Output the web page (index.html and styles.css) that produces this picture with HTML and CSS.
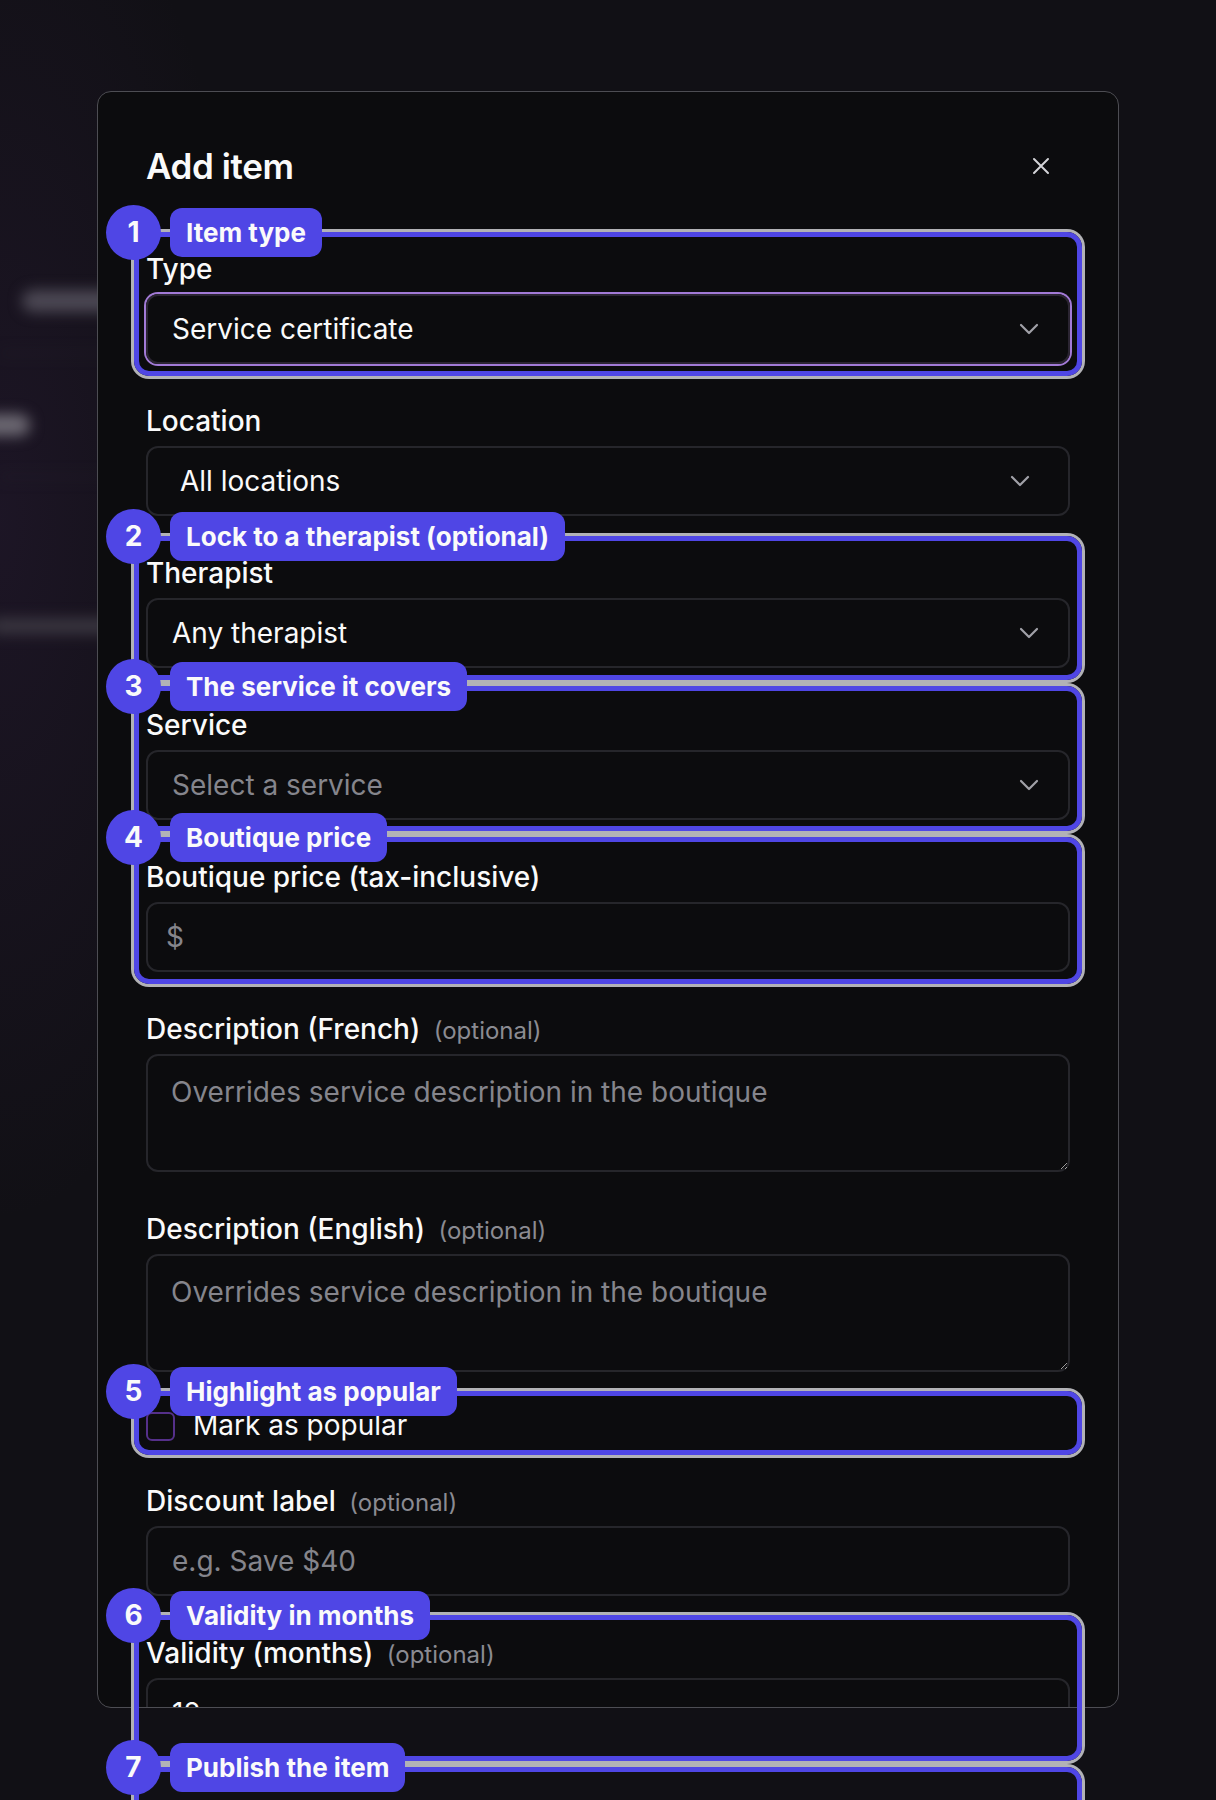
FILE: index.html
```html
<!DOCTYPE html>
<html lang="en">
<head>
    <meta charset="utf-8">
    <meta name="viewport" content="width=device-width, initial-scale=1.0">
    <title>Add item</title>
    <link rel="stylesheet" href="styles.css">
</head>
<body>

    <!-- app behind the dialog, blurred -->
    <div class="app">
        <div class="app-bar bar-title"></div>
        <div class="app-line"></div>
        <div class="app-bar bar-side"></div>
        <div class="app-line"></div>
        <div class="app-bar bar-row"></div>
    </div>

    <div class="modal">
        <div class="modal-header">
            <h2>Add item</h2>
            <button class="close" type="button" aria-label="Close">
                <svg width="20" height="20" viewBox="0 0 20 20"><path d="M3 3l14 14M17 3L3 17" fill="none" stroke="currentColor" stroke-width="2" stroke-linecap="round"/></svg>
            </button>
        </div>

        <form class="form">
            <div class="field">
                <label>Type</label>
                <div class="select focused">
                    <span>Service certificate</span>
                    <svg class="chevron" width="20" height="12" viewBox="0 0 20 12"><path d="M2 2l8 8 8-8" fill="none" stroke="currentColor" stroke-width="2.2" stroke-linecap="round" stroke-linejoin="round"/></svg>
                </div>
            </div>

            <div class="field">
                <label>Location</label>
                <div class="select native">
                    <span>All locations</span>
                    <svg class="chevron" width="20" height="12" viewBox="0 0 20 12"><path d="M2 2l8 8 8-8" fill="none" stroke="currentColor" stroke-width="2.2" stroke-linecap="round" stroke-linejoin="round"/></svg>
                </div>
            </div>

            <div class="field">
                <label>Therapist</label>
                <div class="select">
                    <span>Any therapist</span>
                    <svg class="chevron" width="20" height="12" viewBox="0 0 20 12"><path d="M2 2l8 8 8-8" fill="none" stroke="currentColor" stroke-width="2.2" stroke-linecap="round" stroke-linejoin="round"/></svg>
                </div>
            </div>

            <div class="field">
                <label>Service</label>
                <div class="select">
                    <span class="placeholder">Select a service</span>
                    <svg class="chevron" width="20" height="12" viewBox="0 0 20 12"><path d="M2 2l8 8 8-8" fill="none" stroke="currentColor" stroke-width="2.2" stroke-linecap="round" stroke-linejoin="round"/></svg>
                </div>
            </div>

            <div class="field">
                <label>Boutique price (tax-inclusive)</label>
                <div class="prefixed">
                    <span class="prefix">$</span>
                    <input type="text">
                </div>
            </div>

            <div class="field">
                <label>Description (French) <span class="optional">(optional)</span></label>
                <textarea placeholder="Overrides service description in the boutique"></textarea>
            </div>

            <div class="field">
                <label>Description (English) <span class="optional">(optional)</span></label>
                <textarea placeholder="Overrides service description in the boutique"></textarea>
            </div>

            <div class="check-row">
                <span class="checkbox"></span>
                <span>Mark as popular</span>
            </div>

            <div class="field">
                <label>Discount label <span class="optional">(optional)</span></label>
                <input class="input" type="text" placeholder="e.g. Save $40">
            </div>

            <div class="field">
                <label>Validity (months) <span class="optional">(optional)</span></label>
                <input class="input" type="text" value="12">
            </div>
        </form>
    </div>

    <!-- tour highlights drawn over the page -->
    <div class="annotations">
        <div class="hl hl-1"><div class="tag"><span class="num">1</span><span class="pill">Item type</span></div></div>
        <div class="hl hl-2"><div class="tag"><span class="num">2</span><span class="pill">Lock to a therapist (optional)</span></div></div>
        <div class="hl hl-3"><div class="tag"><span class="num">3</span><span class="pill">The service it covers</span></div></div>
        <div class="hl hl-4"><div class="tag"><span class="num">4</span><span class="pill">Boutique price</span></div></div>
        <div class="hl hl-5"><div class="tag"><span class="num">5</span><span class="pill">Highlight as popular</span></div></div>
        <div class="hl hl-6"><div class="tag"><span class="num">6</span><span class="pill">Validity in months</span></div></div>
        <div class="hl hl-7"><div class="tag"><span class="num">7</span><span class="pill">Publish the item</span></div></div>
    </div>

</body>
</html>
```

FILE: styles.css
```css
* {
    box-sizing: border-box;
}

body {
    margin: 0;
    height: 1800px;
    overflow: hidden;
    position: relative;
    font-family: Inter, "Noto Sans", sans-serif;
    color: #fafafa;
    color-scheme: dark;
    background:
        radial-gradient(ellipse 260px 700px at 0 520px, rgba(70, 40, 95, 0.22), transparent),
        #111015;
}

/* blurred page behind */
.app {
    display: flex;
    flex-direction: column;
    padding-top: 290px;
    filter: blur(7px);
}

.app-bar {
    height: 22px;
    border-radius: 11px;
    background: #4c4854;
}

.app-line {
    height: 2px;
    margin-top: 40px;
    width: 300px;
    background: #26232c;
}

.bar-title {
    margin-left: 22px;
    width: 220px;
}

.bar-side {
    margin-top: 60px;
    margin-left: -20px;
    width: 50px;
    background: #6c6872;
}

.app-line + .bar-row {
    margin-top: 140px;
}

.bar-row {
    margin-left: -10px;
    width: 240px;
    height: 16px;
    background: #3a3640;
}

/* dialog */
.modal {
    position: absolute;
    left: 97px;
    top: 91px;
    width: 1022px;
    height: 1617px;
    padding: 48px 48px;
    background: #0c0c0e;
    border: 1px solid #4d4d53;
    border-radius: 14px;
    overflow: hidden;
}

.modal-header {
    display: flex;
    justify-content: space-between;
    align-items: center;
    height: 52px;
    margin-bottom: 60px;
}

.modal-header h2 {
    margin: 0;
    font-size: 35px;
    font-weight: 600;
    line-height: 52px;
    letter-spacing: -0.4px;
}

.close {
    width: 40px;
    height: 40px;
    margin-right: 9px;
    padding: 0;
    border: none;
    background: none;
    color: #d4d4d8;
    display: flex;
    align-items: center;
    justify-content: center;
}

.form {
    display: flex;
    flex-direction: column;
    gap: 40px;
}

.field {
    display: flex;
    flex-direction: column;
    gap: 7px;
}

label {
    font-size: 28px;
    font-weight: 500;
    line-height: 35px;
}

.optional {
    margin-left: 6px;
    font-size: 24px;
    font-weight: 400;
    line-height: 1;
    color: #8b8b92;
}

.select {
    height: 70px;
    padding: 0 29px 0 24px;
    border: 2px solid #26262b;
    border-radius: 12px;
    display: flex;
    align-items: center;
    justify-content: space-between;
    font-size: 28px;
}

.select.native {
    padding: 0 38px 0 32px;
}

.select.focused {
    border-color: #2b2532;
    box-shadow: 0 0 0 2px #a27ad6;
}

.chevron {
    color: #a1a1a8;
}

.placeholder,
.prefix {
    color: #85858c;
}

.prefixed {
    height: 70px;
    padding-left: 18px;
    border: 2px solid #26262b;
    border-radius: 12px;
    display: flex;
    align-items: center;
    font-size: 28px;
}

.prefixed input {
    flex: 1;
    height: 100%;
    border: none;
    background: none;
    outline: none;
    color: #fafafa;
    font: inherit;
}

.input {
    height: 70px;
    padding: 0 24px;
    border: 2px solid #26262b;
    border-radius: 12px;
    background: none;
    color: #fafafa;
    font-family: inherit;
    font-size: 28px;
    outline: none;
}

textarea {
    height: 118px;
    padding: 16px 23px;
    border: 2px solid #26262b;
    border-radius: 12px;
    background: none;
    color: #fafafa;
    font-family: inherit;
    font-size: 28px;
    line-height: 41px;
    outline: none;
}

.input::placeholder,
textarea::placeholder {
    color: #85858c;
}

.check-row {
    display: flex;
    align-items: flex-start;
    gap: 18px;
    height: 32px;
    font-size: 28px;
    line-height: 26px;
}

.checkbox {
    width: 29px;
    height: 29px;
    border: 2px solid #55308a;
    border-radius: 6px;
}

/* tour highlights */
.annotations {
    position: absolute;
    top: 0;
    left: 0;
    width: 100%;
    height: 100%;
    pointer-events: none;
}

.hl {
    position: absolute;
    left: 134px;
    width: 948px;
    border: 5px solid #4f46e5;
    border-radius: 15px;
    box-shadow: 0 0 0 3px #b2b2b6;
}

.hl-1 { top: 232px; height: 144px; }
.hl-2 { top: 536px; height: 144px; }
.hl-3 { top: 686px; height: 145px; }
.hl-4 { top: 837px; height: 147px; }
.hl-5 { top: 1391px; height: 64px; }
.hl-6 { top: 1615px; height: 146px; }
.hl-7 { top: 1767px; height: 150px; }

.tag {
    position: absolute;
    top: -32.5px;
    left: -33px;
    display: flex;
    align-items: center;
    gap: 9px;
}

.num {
    width: 55px;
    height: 55px;
    border-radius: 50%;
    background: #4f46e5;
    display: flex;
    align-items: center;
    justify-content: center;
    font-size: 28px;
    font-weight: 700;
}

.pill {
    height: 49px;
    padding: 0 16px;
    border-radius: 12px;
    background: #4f46e5;
    display: flex;
    align-items: center;
    font-size: 26px;
    font-weight: 700;
    white-space: nowrap;
}
```
